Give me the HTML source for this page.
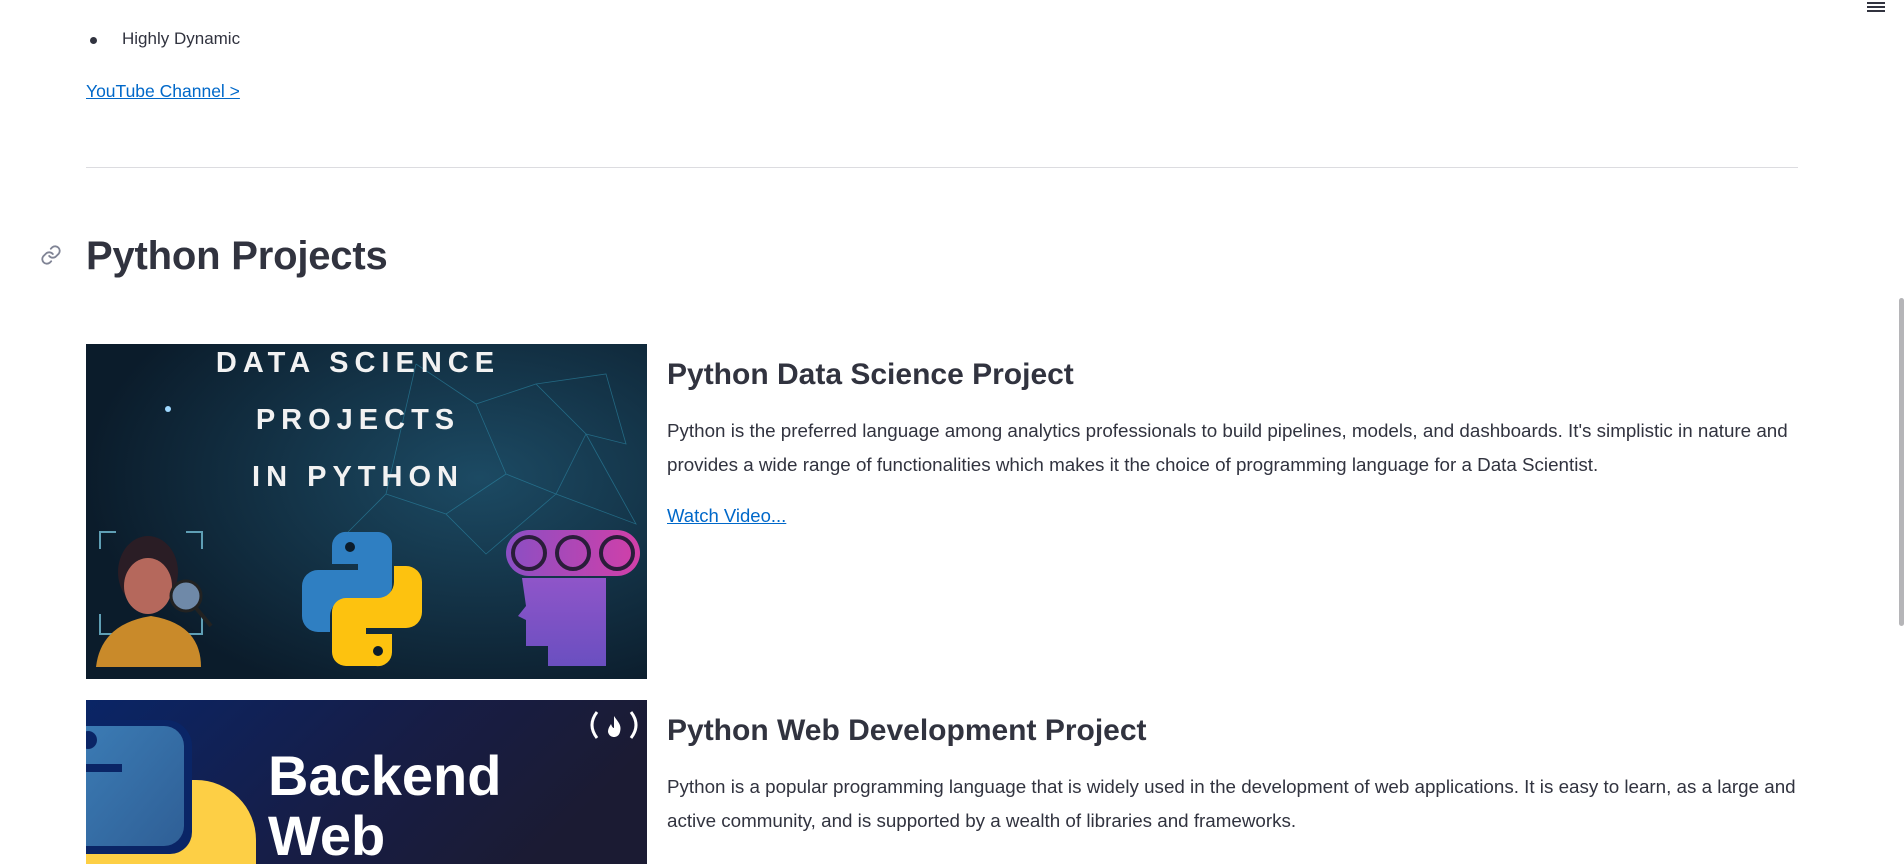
<!DOCTYPE html>
<html><head><meta charset="utf-8">
<style>
html,body{margin:0;padding:0;background:#fff;width:1904px;height:864px;overflow:hidden;position:relative;font-family:"Liberation Sans",sans-serif;color:#31333f}
.a{position:absolute;white-space:nowrap}
a{color:#0068c9;text-decoration:underline}
p{margin:0}
</style></head><body>
<div class="a" style="left:90px;top:37px;width:7px;height:7px;border-radius:50%;background:#31333f"></div>
<div class="a" style="left:122px;top:29px;font-size:17px">Highly Dynamic</div>
<div class="a" style="left:86px;top:81px;font-size:17.5px"><a>YouTube Channel &gt;</a></div>
<div class="a" style="left:86px;top:167px;width:1712px;height:1px;background:#dcdce0"></div>

<svg class="a" style="left:40px;top:244px" width="22" height="22" viewBox="0 0 24 24" fill="none" stroke="#808495" stroke-width="2" stroke-linecap="round"><path d="M10 13a5 5 0 0 0 7.5.5l3-3a5 5 0 0 0-7-7l-1.7 1.7"/><path d="M14 11a5 5 0 0 0-7.5-.5l-3 3a5 5 0 0 0 7 7l1.7-1.7"/></svg>
<div class="a" style="left:86px;top:234px;font-size:40px;font-weight:bold;letter-spacing:-0.2px">Python Projects</div>

<!-- image 1 -->
<svg class="a" style="left:86px;top:344px" width="561" height="335" viewBox="0 0 561 335">
<defs>
<radialGradient id="g1" cx="0.7" cy="0.4" r="0.7"><stop offset="0" stop-color="#1c4a63"/><stop offset="1" stop-color="#0b1c2b"/></radialGradient>
<linearGradient id="pp" x1="0" y1="0" x2="1" y2="0"><stop offset="0" stop-color="#8a4fc4"/><stop offset="1" stop-color="#d23fa8"/></linearGradient>
<linearGradient id="pv" x1="0" y1="0" x2="0" y2="1"><stop offset="0" stop-color="#8f55c9"/><stop offset="1" stop-color="#6a4fc0"/></linearGradient>
</defs>
<rect width="561" height="335" fill="url(#g1)"/>
<g stroke="#2d8aa8" stroke-width="0.8" opacity="0.6" fill="none">
<path d="M330 20L390 60L450 40L500 90L470 150L420 130L390 60M450 40L520 30L540 100L500 90M420 130L360 170L400 210L470 150M360 170L300 150L330 20M500 90L550 180L470 150M300 150L260 190"/>
</g>
<circle cx="82" cy="65" r="3" fill="#9fd8ff"/>
<g font-family="Liberation Sans,sans-serif" font-weight="bold" fill="#f2f2f2" font-size="29" text-anchor="middle" letter-spacing="6">
<text x="272" y="28">DATA SCIENCE</text>
<text x="272" y="85">PROJECTS</text>
<text x="272" y="142">IN PYTHON</text>
</g>
<g>
<path d="M14 205V188H30M100 188H116V205M14 270V290H30M116 270V290H100" stroke="#5f9fb5" stroke-width="2" fill="none"/>
<path d="M10 323Q15 280 65 272Q115 280 115 323Z" fill="#c98a2a"/>
<ellipse cx="62" cy="228" rx="30" ry="36" fill="#2a1d25"/>
<ellipse cx="62" cy="242" rx="24" ry="28" fill="#b5685c"/>
<circle cx="100" cy="252" r="15" fill="#6f89a8" stroke="#222" stroke-width="3"/>
<path d="M110 264L125 282" stroke="#222" stroke-width="4"/>
</g>
<g>
<path d="M262 188h30a14 14 0 0 1 14 14v40a14 14 0 0 1-14 14h-32a16 16 0 0 0-16 16v16h-12a16 16 0 0 1-16-16v-30a16 16 0 0 1 16-16h40v-6h-26v-18a14 14 0 0 1 16-14z" fill="#2f7fc2"/>
<path d="M290 322h-30a14 14 0 0 1-14-14v-40a14 14 0 0 1 14-14h32a16 16 0 0 0 16-16v-16h12a16 16 0 0 1 16 16v30a16 16 0 0 1-16 16h-40v6h26v18a14 14 0 0 1-16 14z" fill="#fdc20f"/>
<circle cx="264" cy="203" r="5" fill="#0b1c2b"/><circle cx="292" cy="307" r="5" fill="#0b1c2b"/>
</g>
<rect x="420" y="186" width="134" height="46" rx="23" fill="url(#pp)"/>
<g fill="none" stroke="#2a1d3a" stroke-width="4"><circle cx="443" cy="209" r="16"/><circle cx="487" cy="209" r="16"/><circle cx="531" cy="209" r="16"/></g>
<path d="M436 234h84v88h-58v-20h-22v-26l-8-4 8-10z" fill="url(#pv)"/>
</svg>

<div class="a" style="left:667px;top:358px;font-size:30px;font-weight:bold">Python Data Science Project</div>
<div class="a" style="left:667px;top:414px;font-size:18.8px;line-height:34px">Python is the preferred language among analytics professionals to build pipelines, models, and dashboards. It's simplistic in nature and<br>provides a wide range of functionalities which makes it the choice of programming language for a Data Scientist.</div>
<div class="a" style="left:667px;top:505px;font-size:18.5px"><a>Watch Video...</a></div>

<!-- image 2 -->
<svg class="a" style="left:86px;top:700px" width="561" height="164" viewBox="0 0 561 164">
<defs><linearGradient id="g2" x1="0" y1="0" x2="1" y2="0.3"><stop offset="0" stop-color="#0a2566"/><stop offset="0.6" stop-color="#171d45"/><stop offset="1" stop-color="#1b1b33"/></linearGradient>
<linearGradient id="bl" x1="0" y1="0" x2="1" y2="1"><stop offset="0" stop-color="#3b7bb4"/><stop offset="1" stop-color="#2f5f96"/></linearGradient></defs>
<rect width="561" height="164" fill="url(#g2)"/>
<path d="M0 80h110a60 60 0 0 1 60 60v30H0z" fill="#fdcf45"/>
<path d="M0 20h80a26 26 0 0 1 26 26v86a22 22 0 0 1-22 22H0z" fill="#0a2566"/>
<path d="M0 26h78a20 20 0 0 1 20 20v80a20 20 0 0 1-20 20H0z" fill="url(#bl)"/>
<rect x="0" y="64" width="36" height="8" fill="#0a2566"/>
<circle cx="2" cy="40" r="9" fill="#0a2566"/>
<g font-family="Liberation Sans,sans-serif" font-weight="bold" fill="#fff" font-size="56">
<text x="182" y="95">Backend</text>
<text x="182" y="155">Web</text>
</g>
<path d="M511 12q-10 13 0 26M545 12q10 13 0 26" stroke="#fff" stroke-width="3" fill="none"/>
<path d="M528 16c4 6 8 9 6 16-1 4-4 5-6 5s-5-1-6-5c0-4 2-6 3-8 1 3 2 4 3 4z" fill="#fff"/>
</svg>

<div class="a" style="left:667px;top:714px;font-size:30px;font-weight:bold">Python Web Development Project</div>
<div class="a" style="left:667px;top:770px;font-size:18.8px;line-height:34px">Python is a popular programming language that is widely used in the development of web applications. It is easy to learn, as a large and<br>active community, and is supported by a wealth of libraries and frameworks.</div>

<div class="a" style="left:1867px;top:2px;width:18px;height:2px;background:#31333f;box-shadow:0 4px 0 #31333f,0 8px 0 #31333f"></div>
<div class="a" style="left:1899px;top:298px;width:5px;height:328px;border-radius:3px;background:#b5b5b8"></div>
</body></html>
